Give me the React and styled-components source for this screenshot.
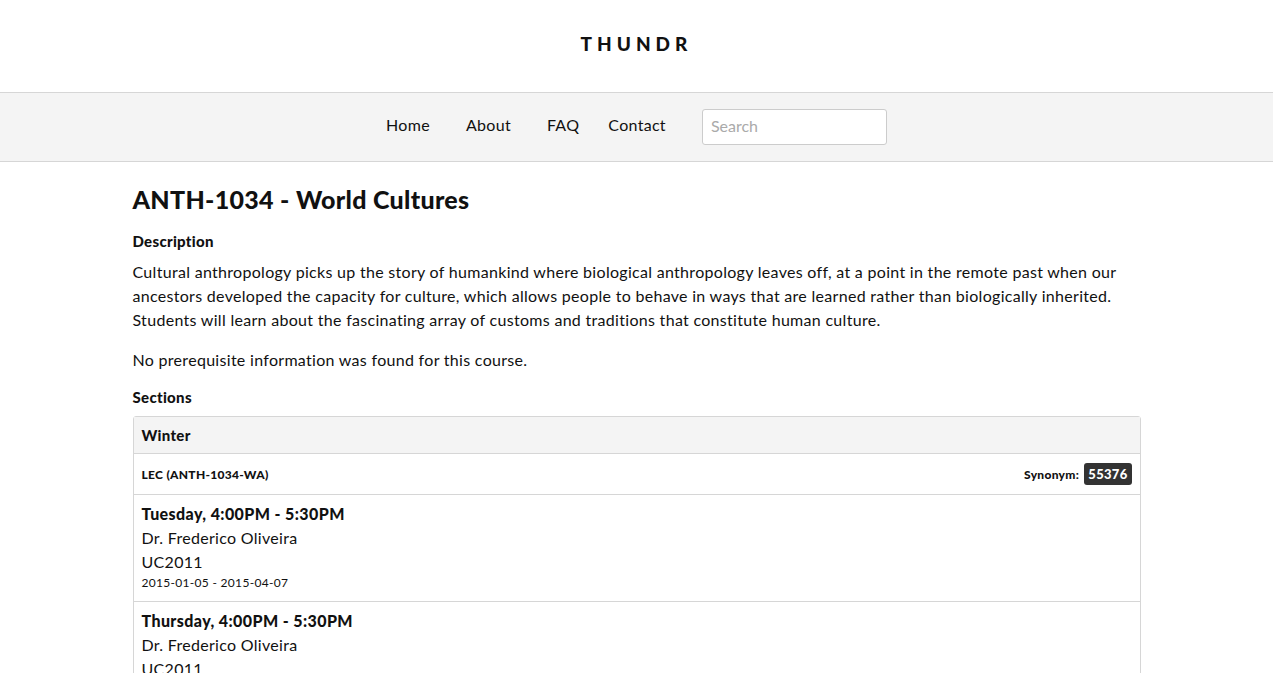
import styled, { createGlobalStyle } from "styled-components";

const GlobalStyle = createGlobalStyle`
  body {
    margin: 0;
    font-family: Lato, "Open Sans", sans-serif;
    letter-spacing: 0.3px;
    color: #111;
    background: #fff;
  }
`;

const Brand = styled.header`
  height: 92px;
  display: flex;
  align-items: center;
  justify-content: center;
  border-bottom: 1px solid #d6d6d6;
`;
const Logo = styled.h1`
  margin: 0 0 6px;
  font-size: 19px;
  font-weight: 900;
  letter-spacing: 5px;
`;

const NavBar = styled.nav`
  height: 68px;
  background: #f4f4f4;
  border-bottom: 1px solid #d6d6d6;
  display: flex;
  align-items: center;
  justify-content: center;
`;
const NavLink = styled.a`
  font-size: 16px;
  color: #111;
  text-decoration: none;
  padding-bottom: 6px;
  margin-right: ${(p) => p.gap || 36}px;
`;
const Search = styled.input`
  width: 185px;
  height: 36px;
  box-sizing: border-box;
  border: 1px solid #ccc;
  border-radius: 3px;
  padding: 0 8px 3px;
  font: inherit;
  font-size: 16px;
  &::placeholder {
    color: #aaa;
  }
`;

const Container = styled.main`
  max-width: 1008px;
  margin: 0 auto;
`;
const Title = styled.h2`
  margin: 22px 0 18px;
  font-size: 25px;
  font-weight: 900;
`;
const Label = styled.h4`
  margin: 0 0 10px;
  font-size: 15px;
  font-weight: 900;
`;
const Text = styled.p`
  margin: 0 0 16px;
  font-size: 16px;
  line-height: 24px;
`;

const Panel = styled.div`
  border: 1px solid #d6d6d6;
  border-radius: 3px;
`;
const PanelHead = styled.div`
  background: #f4f4f4;
  padding: 0 8px;
  height: 36px;
  display: flex;
  align-items: center;
  font-size: 15px;
  font-weight: 900;
  border-bottom: 1px solid #d6d6d6;
`;
const SectionRow = styled.div`
  height: 40px;
  padding: 0 8px;
  display: flex;
  align-items: center;
  justify-content: space-between;
  font-size: 12px;
  font-weight: 900;
  border-bottom: 1px solid #d6d6d6;
`;
const Badge = styled.span`
  display: inline-block;
  background: #333;
  color: #fff;
  border-radius: 3px;
  padding: 3px 4px;
  margin-left: 2px;
  font-size: 13px;
`;
const Meeting = styled.div`
  padding: 7px 8px 9px;
  border-bottom: 1px solid #d6d6d6;
`;
const Day = styled.div`
  font-size: 16px;
  font-weight: 900;
  letter-spacing: 0.4px;
  line-height: 24px;
`;
const Line = styled.div`
  font-size: 16px;
  line-height: 24px;
`;
const Dates = styled.div`
  font-size: 12px;
  line-height: 18px;
`;

const meetings = [
  { day: "Tuesday", time: "4:00PM - 5:30PM", prof: "Dr. Frederico Oliveira", room: "UC2011", dates: "2015-01-05 - 2015-04-07" },
  { day: "Thursday", time: "4:00PM - 5:30PM", prof: "Dr. Frederico Oliveira", room: "UC2011", dates: "2015-01-08 - 2015-04-09" },
];

export default function App() {
  return (
    <>
      <GlobalStyle />
      <Brand>
        <Logo>THUNDR</Logo>
      </Brand>
      <NavBar>
        <NavLink href="#">Home</NavLink>
        <NavLink href="#">About</NavLink>
        <NavLink href="#" gap={29}>FAQ</NavLink>
        <NavLink href="#">Contact</NavLink>
        <Search placeholder="Search" />
      </NavBar>
      <Container>
        <Title>ANTH-1034 - World Cultures</Title>
        <Label>Description</Label>
        <Text>
          Cultural anthropology picks up the story of humankind where biological anthropology leaves off, at a point in the remote past when our ancestors developed the capacity for culture, which allows people to behave in ways that are learned rather than biologically inherited. Students will learn about the fascinating array of customs and traditions that constitute human culture.
        </Text>
        <Text>No prerequisite information was found for this course.</Text>
        <Label>Sections</Label>
        <Panel>
          <PanelHead>Winter</PanelHead>
          <SectionRow>
            <span>LEC (ANTH-1034-WA)</span>
            <span>
              Synonym: <Badge>55376</Badge>
            </span>
          </SectionRow>
          {meetings.map((m) => (
            <Meeting key={m.day}>
              <Day>
                {m.day}, {m.time}
              </Day>
              <Line>{m.prof}</Line>
              <Line>{m.room}</Line>
              <Dates>{m.dates}</Dates>
            </Meeting>
          ))}
        </Panel>
      </Container>
    </>
  );
}
